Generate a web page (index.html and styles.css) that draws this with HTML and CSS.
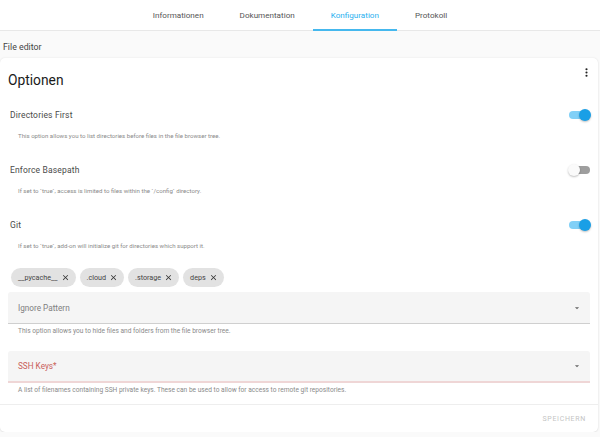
FILE: index.html
```html
<!DOCTYPE html>
<html lang="de">
	<head>
		<meta charset="UTF-8">
		<meta name="viewport" content="width=device-width, initial-scale=1.0">
		<title>File editor – Konfiguration</title>
		<link rel="stylesheet" href="styles.css">
	</head>
	<body>
		<nav class="tabs">
			<a class="tab">Informationen</a>
			<a class="tab">Dokumentation</a>
			<a class="tab active">Konfiguration</a>
			<a class="tab">Protokoll</a>
		</nav>

		<div class="addon-name">File editor</div>

		<section class="card">
			<div class="card-header">
				<h1>Optionen</h1>
				<svg class="menu" viewBox="0 0 24 24"><path d="M12,16A2,2 0 0,1 14,18A2,2 0 0,1 12,20A2,2 0 0,1 10,18A2,2 0 0,1 12,16M12,10A2,2 0 0,1 14,12A2,2 0 0,1 12,14A2,2 0 0,1 10,12A2,2 0 0,1 12,10M12,4A2,2 0 0,1 14,6A2,2 0 0,1 12,8A2,2 0 0,1 10,6A2,2 0 0,1 12,4Z"/></svg>
			</div>

			<div class="option">
				<div class="option-head">
					<span>Directories First</span>
					<span class="toggle on"><span class="knob"></span></span>
				</div>
				<p class="desc">This option allows you to list directories before files in the file browser tree.</p>
			</div>

			<div class="option">
				<div class="option-head">
					<span>Enforce Basepath</span>
					<span class="toggle"><span class="knob"></span></span>
				</div>
				<p class="desc">If set to `true`, access is limited to files within the `/config` directory.</p>
			</div>

			<div class="option">
				<div class="option-head">
					<span>Git</span>
					<span class="toggle on"><span class="knob"></span></span>
				</div>
				<p class="desc">If set to `true`, add-on will initialize git for directories which support it.</p>
			</div>

			<div class="chips">
				<span class="chip">__pycache__ <svg viewBox="0 0 24 24"><path d="M19,6.41L17.59,5L12,10.59L6.41,5L5,6.41L10.59,12L5,17.59L6.41,19L12,13.41L17.59,19L19,17.59L13.41,12L19,6.41Z"/></svg></span>
				<span class="chip">.cloud <svg viewBox="0 0 24 24"><path d="M19,6.41L17.59,5L12,10.59L6.41,5L5,6.41L10.59,12L5,17.59L6.41,19L12,13.41L17.59,19L19,17.59L13.41,12L19,6.41Z"/></svg></span>
				<span class="chip">.storage <svg viewBox="0 0 24 24"><path d="M19,6.41L17.59,5L12,10.59L6.41,5L5,6.41L10.59,12L5,17.59L6.41,19L12,13.41L17.59,19L19,17.59L13.41,12L19,6.41Z"/></svg></span>
				<span class="chip">deps <svg viewBox="0 0 24 24"><path d="M19,6.41L17.59,5L12,10.59L6.41,5L5,6.41L10.59,12L5,17.59L6.41,19L12,13.41L17.59,19L19,17.59L13.41,12L19,6.41Z"/></svg></span>
			</div>

			<div class="field">
				<span>Ignore Pattern</span>
				<svg class="arrow" viewBox="0 0 24 24"><path d="M7 10l5 5 5-5z"/></svg>
			</div>
			<p class="desc field-desc">This option allows you to hide files and folders from the file browser tree.</p>

			<div class="field invalid">
				<span>SSH Keys*</span>
				<svg class="arrow" viewBox="0 0 24 24"><path d="M7 10l5 5 5-5z"/></svg>
			</div>
			<p class="desc field-desc">A list of filenames containing SSH private keys. These can be used to allow for access to remote git repositories.</p>

			<div class="card-actions">
				<button disabled>Speichern</button>
			</div>
		</section>
	</body>
</html>
```

FILE: styles.css
```css
body {
	margin: 0;
	background-color: #fafafa;
	font-family: Roboto, "Noto Sans", sans-serif;
	color: #212121;
}

.tabs {
	display: flex;
	justify-content: center;
	height: 31px;
	background-color: #fff;
	border-bottom: 1px solid #e8e8e8;
	box-sizing: border-box;
}

.tab {
	display: flex;
	align-items: center;
	padding: 0 18px;
	font-size: 8.1px;
	color: #555;
	border-bottom: 2px solid transparent;
	margin-bottom: -1px;
}

.tab.active {
	color: #29b0ef;
	border-bottom-color: #45b8ee;
}

.addon-name {
	height: 23px;
	padding: 4px 0 0 3px;
	display: flex;
	align-items: center;
	font-size: 8.8px;
	color: #444;
}

.card {
	width: 598px;
	background-color: #fff;
	border-radius: 5px;
	box-shadow: 0 0 2px rgba(0, 0, 0, 0.1), 0 1px 2px rgba(0, 0, 0, 0.06);
	padding: 0 8px;
	box-sizing: border-box;
}

.card-header {
	display: flex;
	justify-content: space-between;
	height: 43px;
	align-items: center;
}

.card-header h1 {
	margin: 0;
	font-size: 13.8px;
	font-weight: 400;
	color: #1a1a1a;
}

.menu {
	width: 13px;
	height: 13px;
	fill: #222;
	align-self: flex-start;
	margin-top: 8px;
	margin-right: -3px;
}

.option {
	margin-bottom: 13px;
}

.option-head {
	display: flex;
	justify-content: space-between;
	align-items: center;
	height: 28px;
	padding-left: 2px;
	font-size: 8.5px;
	color: #4a4a4a;
	letter-spacing: 0.02em;
}

.desc {
	margin: 0;
	height: 14px;
	line-height: 14px;
	padding-left: 10px;
	font-size: 6.1px;
	color: #8a8a8a;
}

.toggle {
	position: relative;
	width: 21px;
	height: 8px;
	border-radius: 4px;
	background-color: #9e9e9e;
}

.toggle .knob {
	position: absolute;
	top: -2px;
	left: -1px;
	width: 12px;
	height: 12px;
	border-radius: 50%;
	background-color: #fafafa;
	box-shadow: 0 1px 2px rgba(0, 0, 0, 0.25);
}

.toggle.on {
	background-color: #81d0f7;
}

.toggle.on .knob {
	left: auto;
	right: -1px;
	background-color: #1a9fe6;
}

.chips {
	display: flex;
	gap: 4px;
	margin: 15px 0 5px 3px;
}

.chip {
	display: flex;
	align-items: center;
	gap: 3px;
	height: 19px;
	padding: 0 6px 0 7px;
	border-radius: 10px;
	background-color: #e2e2e2;
	font-size: 7.2px;
	color: #444;
}

.chip svg {
	width: 9px;
	height: 9px;
	fill: #333;
}

.field {
	display: flex;
	justify-content: space-between;
	align-items: center;
	height: 32px;
	padding: 0 8px 0 10px;
	background-color: #f5f5f5;
	border-radius: 3px 3px 0 0;
	border-bottom: 1px solid #cfcfcf;
	box-sizing: border-box;
	font-size: 8.2px;
	color: #808080;
}

.field .arrow {
	width: 10px;
	height: 10px;
	fill: #666;
}

.field.invalid {
	color: #c9605a;
	border-bottom: 2px solid #efd6d6;
}

.field-desc {
	margin-bottom: 13px;
	font-size: 6.6px;
}

.field-desc:last-of-type {
	margin-bottom: 7px;
}

.card-actions {
	display: flex;
	justify-content: flex-end;
	align-items: center;
	height: 27px;
	margin: 0 -8px;
	padding: 0 12px;
	border-top: 1px solid #eee;
}

.card-actions button {
	border: none;
	background: none;
	padding: 0;
	font-family: inherit;
	font-size: 7px;
	letter-spacing: 0.1em;
	text-transform: uppercase;
	color: #c4c4c4;
}
```
